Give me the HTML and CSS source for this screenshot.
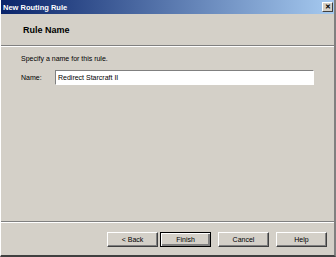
FILE: index.html
```html
<!DOCTYPE html>
<html lang="en">
<head>
  <meta charset="UTF-8">
  <title>New Routing Rule</title>
  <link rel="stylesheet" href="styles.css">
</head>
<body>
  <div class="window">
    <div class="titlebar">
      <span class="title">New Routing Rule</span>
      <span class="close">&#x2715;</span>
    </div>
    <div class="header">
      <h1>Rule Name</h1>
    </div>
    <div class="content">
      <p class="hint">Specify a name for this rule.</p>
      <div class="field">
        <label for="name">Name:</label>
        <input id="name" type="text" value="Redirect Starcraft II">
      </div>
    </div>
    <div class="footer">
      <button class="btn">&lt; Back</button>
      <button class="btn default">Finish</button>
      <button class="btn gap">Cancel</button>
      <button class="btn gap">Help</button>
    </div>
  </div>
</body>
</html>
```

FILE: styles.css
```css
body {
  margin: 0;
  background: #d4d0c8;
  font-family: "Liberation Sans", Arial, sans-serif;
  font-size: 7px;
  color: #000;
}

.window {
  width: 336px;
  height: 257px;
  box-sizing: border-box;
  display: flex;
  flex-direction: column;
  background: #d4d0c8;
  border-left: 1px solid #fff;
  border-right: 2px solid #808080;
  border-bottom: 2px solid #404040;
}

.titlebar {
  height: 14px;
  display: flex;
  align-items: center;
  justify-content: space-between;
  padding: 0 1px 0 2px;
  background: linear-gradient(to right, #0a246a, #a6caf0);
  color: #fff;
}

.title {
  font-weight: bold;
  font-size: 7.5px;
}

.close {
  width: 11px;
  height: 10px;
  box-sizing: border-box;
  background: #d4d0c8;
  border: 1px solid;
  border-color: #fff #404040 #404040 #fff;
  color: #000;
  font-size: 7px;
  font-weight: bold;
  line-height: 8px;
  text-align: center;
}

.header {
  height: 31px;
  border-bottom: 1px solid #808080;
  box-shadow: 0 1px 0 #fff;
  display: flex;
  align-items: center;
  padding-left: 22px;
}

h1 {
  margin: 0;
  font-size: 9px;
  font-weight: bold;
}

.content {
  flex: 1;
  padding: 9px 20px 0 20px;
  border-bottom: 1px solid #808080;
  box-shadow: 0 1px 0 #fff;
}

.hint {
  margin: 0 0 8px 0;
}

.field {
  display: flex;
  align-items: center;
}

.field label {
  width: 34px;
}

.field input {
  width: 259px;
  height: 15px;
  box-sizing: border-box;
  padding: 0 2px;
  font-family: inherit;
  font-size: 7px;
  background: #fff;
  border: 1px solid;
  border-color: #808080 #fff #fff #808080;
  outline: 1px solid #d4d0c8;
}

.footer {
  height: 33px;
  box-sizing: border-box;
  display: flex;
  justify-content: flex-end;
  align-items: flex-start;
  padding: 10px 7px 0 0;
}

.btn {
  width: 51px;
  height: 15px;
  box-sizing: border-box;
  padding: 0;
  font-family: inherit;
  font-size: 7px;
  color: #000;
  background: #d4d0c8;
  border: 1px solid;
  border-color: #fff #404040 #404040 #fff;
  box-shadow: inset -1px -1px 0 #808080;
}

.btn.default {
  border: 1px solid #000;
  box-shadow: inset 1px 1px 0 #fff, inset -2px -2px 0 #808080;
  margin-left: 2px;
}

.btn.gap {
  margin-left: 7px;
}
```
